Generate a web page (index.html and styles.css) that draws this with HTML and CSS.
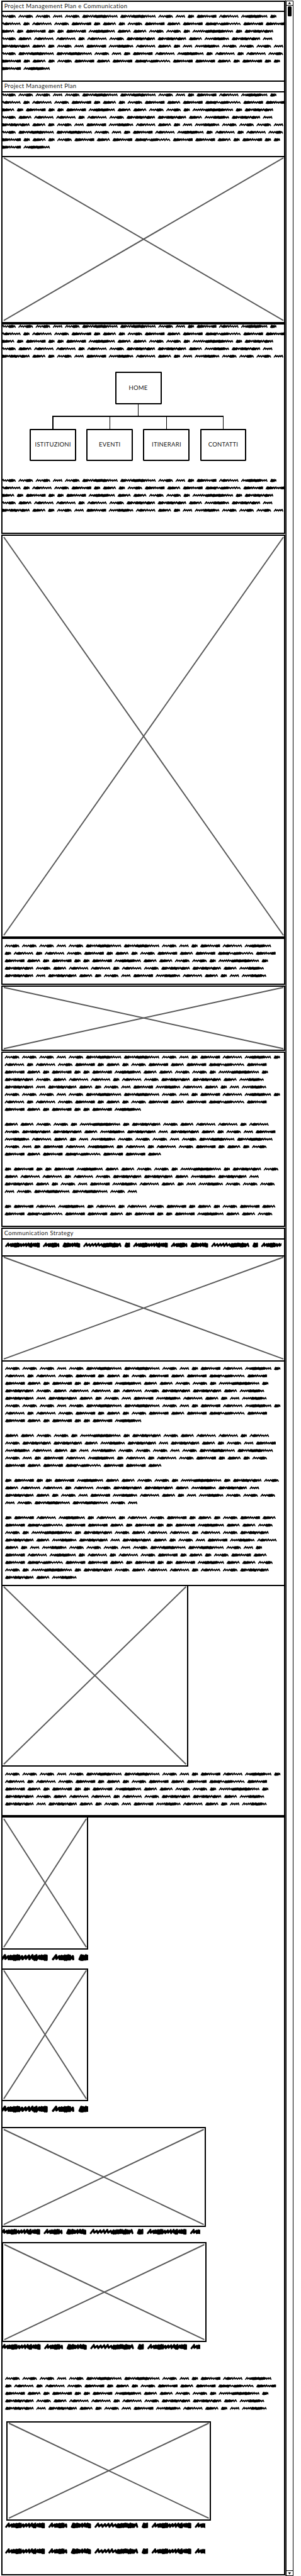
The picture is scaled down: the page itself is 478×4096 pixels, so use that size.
FILE: index.html
```html
<!DOCTYPE html>
<html lang="it">
<head>
<meta charset="utf-8">
<title>Project Management Plan e Communication</title>
<link rel="stylesheet" href="styles.css">
</head>
<body>
<div class="window">
  <main class="content">
    <section class="box intro">
      <h1 class="title">Project Management Plan e Communication</h1>
      <svg class="scribble" data-kind="flush" data-lines="aaabaccabdesfd|sdsaedgdaegeCee|gdeddefggaadhdi|agssdsaiigjib|igdabejsgdbjaaab|accabdesfdsdsa|edgdaegeCeegdedd|ef"></svg>
    </section>
    <section class="box plan">
      <h2 class="title">Project Management Plan</h2>
      <svg class="scribble" data-kind="flush" data-lines="aaabaccabdesfd|sdsaedgdaegeCee|gdeddefggaadhdi|agssdsaiigjib|igdabejsgdbjaaab|accabdesfdsdsa|edgdaegeCeegdedd|ef"></svg>
    </section>
    <div class="image image-plan"><svg class="cross"><line x1="0" y1="0" x2="100%" y2="100%"/><line x1="0" y1="100%" x2="100%" y2="0"/></svg></div>
    <section class="box sitemap">
      <svg class="scribble" data-kind="flush" data-lines="aaabaccabdesfd|sdsaedgdaegeCee|gdeddefggaadhdi|agssdsaiigjib|igdabejsgdbjaaab"></svg>
      <div class="tree">
        <div class="node">HOME</div>
        <div class="stem"></div>
        <div class="branches">
          <div class="branch"><div class="node">ISTITUZIONI</div></div>
          <div class="branch"><div class="node">EVENTI</div></div>
          <div class="branch"><div class="node">ITINERARI</div></div>
          <div class="branch"><div class="node">CONTATTI</div></div>
        </div>
      </div>
      <svg class="scribble" data-kind="flush" data-lines="aaabaccabdesfd|sdsaedgdaegeCee|gdeddefggaadhdi|agssdsaiigjib|igdabejsgdbjaaab"></svg>
    </section>
    <div class="image image-tall"><svg class="cross"><line x1="0" y1="0" x2="100%" y2="100%"/><line x1="0" y1="100%" x2="100%" y2="0"/></svg></div>
    <section class="box note">
      <svg class="scribble" data-kind="inset" data-lines="aaabaccabdesf|dsdsaedgdaegeCe|egdeddefggaadhd|iagssdsaiigj|ibigdabejsgdbj"></svg>
    </section>
    <div class="image image-wide"><svg class="cross"><line x1="0" y1="0" x2="100%" y2="100%"/><line x1="0" y1="100%" x2="100%" y2="0"/></svg></div>
    <section class="box article">
      <svg class="scribble" data-kind="inset" data-lines="aaabaccabdesfd|sdsaedgdaegeCe|egdeddefggaadhd|iagssdsaiigj|ibigdabejsgdbj|aaabaccabdesfd|sdsaedgdaegeCe|egdeddef||ggaadhdiagssds|aiigjibigdabe|jsgdbjaaabacc|abdesfdsdsaedgda|egeCeeg||deddefggaadhdia|gssdsaiigjib|igdabejsgdbjaaa|baccab||desfdsdsaedgdaeg|eCeegdeddefgga"></svg>
    </section>
    <section class="box strategy">
      <h2 class="title">Communication Strategy</h2>
      <svg class="scribble" data-kind="heading" data-lines="KLMNOKLMNOK"></svg>
    </section>
    <div class="image image-strategy"><svg class="cross"><line x1="0" y1="0" x2="100%" y2="100%"/><line x1="0" y1="100%" x2="100%" y2="0"/></svg></div>
    <section class="box details">
      <svg class="scribble" data-kind="wide" data-lines="aaabaccabdesfd|sdsaedgdaegeCe|egdeddefggaadhd|iagssdsaiigj|ibigdabejsgdbj|aaabaccabdesfd|sdsaedgdaegeCe|egdeddef||ggaadhdiagssds|aiigjibigdabe|jsgdbjaaabacc|abdesfdsdsaedgda|egeCeeg||deddefggaadhdia|gssdsaiigjib|igdabejsgdbjaaa|baccab||desfdsdsaedgdaeg|eCeegdeddefgga|adhdiagssdsai|igjibigdabejs|gdbjaaabaccabd|esfdsdsaedgdaeg|eCeegdeddefgga|adhdiagssdsai|igj"></svg>
      <div class="figure-row"><div class="image image-square"><svg class="cross"><line x1="0" y1="0" x2="100%" y2="100%"/><line x1="0" y1="100%" x2="100%" y2="0"/></svg></div></div>
      <svg class="scribble" data-kind="wide" data-lines="aaabaccabdesfd|sdsaedgdaegeCe|egdeddefggaadhd|iagssdsaiigj|ibigdabejsgdbj"></svg>
    </section>
    <section class="box gallery">
      <div class="image portrait"><svg class="cross"><line x1="0" y1="0" x2="100%" y2="100%"/><line x1="0" y1="100%" x2="100%" y2="0"/></svg></div>
      <svg class="scribble caption-portrait" data-kind="portrait" data-lines="KLM"></svg>
      <div class="image portrait portrait-next"><svg class="cross"><line x1="0" y1="0" x2="100%" y2="100%"/><line x1="0" y1="100%" x2="100%" y2="0"/></svg></div>
      <svg class="scribble caption-portrait" data-kind="portrait" data-lines="KLM"></svg>
      <div class="image landscape landscape-first"><svg class="cross"><line x1="0" y1="0" x2="100%" y2="100%"/><line x1="0" y1="100%" x2="100%" y2="0"/></svg></div>
      <svg class="scribble" data-kind="caption" data-lines="KLMNOKL"></svg>
      <div class="image landscape landscape-second"><svg class="cross"><line x1="0" y1="0" x2="100%" y2="100%"/><line x1="0" y1="100%" x2="100%" y2="0"/></svg></div>
      <svg class="scribble" data-kind="captionNext" data-lines="KLMNOKL"></svg>
      <svg class="scribble closing-text" data-kind="wide" data-lines="aaabaccabdesf|dsdsaedgdaegeCe|egdeddefggaadhd|iagssdsaiigj|ibigdabejsgdbj"></svg>
      <div class="image landscape landscape-third"><svg class="cross"><line x1="0" y1="0" x2="100%" y2="100%"/><line x1="0" y1="100%" x2="100%" y2="0"/></svg></div>
      <svg class="scribble" data-kind="captionInset" data-lines="KLMNOKL"></svg>
      <svg class="scribble closing-caption" data-kind="captionInset" data-lines="KLMNOKL"></svg>
    </section>
  </main>
  <aside class="scrollbar">
    <div class="arrow"><svg viewBox="0 0 8 6"><path d="M4 0L7.6 5.6H.4Z"/></svg></div>
    <div class="thumb"></div>
    <div class="arrow arrow-down"><svg viewBox="0 0 8 6"><path d="M4 6L7.6 .4H.4Z"/></svg></div>
  </aside>
</div>
<script src="scribble.js"></script>
</body>
</html>
```

FILE: scribble.js
```js
// Greeked words: width of the word and the rhythm of its strokes
// (l = one loose stroke, d = two dense strokes).
const WORDS = {
  a: [31, "lllddl"], b: [20.2, "llll"], c: [75, "ddlllddddddlllll"],
  C: [75, "ddddlldddlllll"], d: [13.6, "ddl"], e: [41.8, "dddlllldd"],
  s: [41.2, "lddlllll"], f: [55.8, "lldddddddlll"], g: [27.8, "dddll"],
  h: [86, "lllllldddddddddllll"], i: [60.4, "ddlldddllddll"], j: [52, "lllldddddll"],
  K: [73.4, "lldddlllldldd"], L: [35, "lldddl"], M: [37.3, "dddlldd"],
  N: [80.7, "lllllldddddl"], O: [11.8, "dd"]
};

// x: start of a line, size: enlargement, clip: right edge
const KINDS = {
  flush: { x: 3.6, size: 1, clip: 603 },
  inset: { x: 11.2, size: 1, clip: 603 },
  wide: { x: 12, size: 1, clip: 603 },
  heading: { x: 12.6, size: 1, clip: 595, large: true },
  portrait: { x: 4, size: 1.354, clip: 187, large: true },
  caption: { x: 3, size: 1.144, clip: 423, large: true },
  captionNext: { x: 4, size: 1.144, clip: 424, large: true },
  captionInset: { x: 13, size: 1.144, clip: 434, large: true }
};

const round = n => Math.round(n * 100) / 100;

function wordPath(x, y, width, rhythm, height, pen) {
  const step = (width - pen) / rhythm.length;
  let left = x;
  let d = `M${round(left)} ${round(y + height * 0.4)}`;
  [...rhythm].forEach((stroke, k) => {
    const strokes = stroke === "d" ? 2 : 1;
    const w = step / strokes;
    for (let s = 0; s < strokes; s++) {
      const top = y - height * (0.5 - ((k * 3 + s) % 4) * 0.07);
      const base = y + height * (stroke === "d" ? 0.55 - (k % 3) * 0.08 : 0.3 + (k % 2) * 0.1);
      const lean = Math.min(w * 1.1, height * 0.7);
      d += `L${round(Math.min(left + lean, x + width - pen))} ${round(top)}`;
      left += w;
      d += `L${round(left)} ${round(base)}`;
    }
  });
  return d;
}

document.querySelectorAll(".scribble").forEach(svg => {
  const kind = KINDS[svg.dataset.kind];
  const rows = svg.dataset.lines.split("|");
  const pitch = kind.large ? 20 : 15.8;
  const gap = (kind.large ? 6.5 : 5.45) * kind.size;
  const height = (kind.large ? 6.8 : 4.5) * kind.size;
  const pen = (kind.large ? 3.6 : 2.3) * kind.size;
  let d = "";
  rows.forEach((row, r) => {
    let x = kind.x;
    for (const key of row) {
      const [width, rhythm] = WORDS[key];
      d += wordPath(x, (r + 0.5) * pitch, width * kind.size, rhythm, height, pen);
      x += width * kind.size + gap;
    }
  });
  svg.setAttribute("viewBox", `2.7 0 ${kind.clip - 2.7} ${rows.length * pitch}`);
  svg.style.width = `${(kind.clip - 2.7) / 10}rem`;
  svg.style.height = `${rows.length * pitch / 10}rem`;
  svg.innerHTML = `<path d="${d}" stroke-width="${pen}"/>`;
});
```

FILE: styles.css
```css
/* 1rem is ten units of the wireframe grid */
html { font-size: 7.51px; --line: 2px; }
* { box-sizing: border-box; }
body { margin: 0; background: #fff; color: #000; font-family: Lato, "Noto Sans", sans-serif; }

.window { display: flex; height: 545.4rem; overflow: hidden; }
.content { width: 60.45rem; flex: none; padding: .1rem .08rem 0 .27rem; border-right: .1rem solid #555; }
.content > * { flex: none; }

.box { display: flex; flex-direction: column; align-items: flex-start; width: 60.1rem; border: var(--line) solid #000; }
.title { width: 100%; margin: 0; padding-left: .35rem; border-bottom: var(--line) solid #000; font-weight: 400; font-size: 1.26rem; line-height: 1.95rem; letter-spacing: .048rem; color: #222; flex: none; }

.scribble { display: block; flex: none; margin-left: calc(-1 * var(--line)); overflow: hidden; }
.scribble path { fill: none; stroke: #000; stroke-linejoin: round; stroke-linecap: round; }

.image { width: 60.1rem; padding: .22rem; border: var(--line) solid #000; flex: none; }
.cross { display: block; width: 100%; height: 100%; overflow: visible; }
.cross line { stroke: #585858; stroke-width: .26rem; }

.intro { height: 17rem; border-bottom: 0; }
.intro .title { height: 2.2rem; }
.intro .scribble { margin-top: .05rem; }
.plan { height: 15.9rem; border-bottom: 0; }
.plan .title { height: 2.17rem; }
.plan .scribble { margin-top: -.22rem; }
.image-plan { height: 35.4rem; }

.sitemap { height: 44.7rem; }
.sitemap .scribble { margin-top: -.42rem; }
.sitemap .tree + .scribble { margin-top: 3.34rem; }
.tree { display: flex; flex-direction: column; align-items: center; width: 45.9rem; margin: 2.56rem 0 0 5.75rem; }
.node { display: flex; align-items: center; justify-content: center; width: 9.85rem; height: 6.85rem; border: var(--line) solid #000; border-radius: .15rem; font-size: 1.27rem; letter-spacing: .03rem; color: #111; padding-bottom: .1rem; }
.stem { width: .2rem; height: 2.5rem; background: #000; }
.branches { display: flex; gap: 2.15rem; width: 45.9rem; }
.branch { width: 9.85rem; position: relative; padding-top: 2.7rem; }
.branch::before { content: ""; position: absolute; left: 4.83rem; top: 0; width: .2rem; height: 2.7rem; background: #000; }
.branch::after { content: ""; position: absolute; left: 4.83rem; top: 0; width: 12.2rem; height: .2rem; background: #000; }
.branch:last-child::after { display: none; }

.image-tall { height: 85.3rem; margin-top: .1rem; }
.note { height: 9.9rem; margin-top: .1rem; }
.note .scribble { margin-top: .55rem; }
.image-wide { height: 13.95rem; margin-top: .1rem; }
.article { height: 37.1rem; margin-top: .15rem; }
.article .scribble { margin-top: .07rem; }
.strategy { height: 5.78rem; margin-top: .15rem; border-bottom: 0; }
.strategy .title { height: 2.25rem; }
.strategy .scribble { margin-top: .11rem; }
.image-strategy { height: 22.52rem; }

.details { height: 96.28rem; border-top: 0; }
.details .scribble { margin-top: .76rem; }
.figure-row { width: 100%; margin-top: .67rem; border-top: var(--line) solid #000; flex: none; }
.image-square { width: 39.5rem; height: 38.55rem; margin: calc(-1 * var(--line)) 0 0 calc(-1 * var(--line)); }

.gallery { height: 160.67rem; margin-top: .1rem; }
.portrait { width: 18.43rem; height: 28.17rem; margin: calc(-1 * var(--line)) 0 0 calc(-1 * var(--line)); }
.portrait-next { margin-top: 1.33rem; }
.caption-portrait { margin-top: .62rem; }
.landscape { width: 43.25rem; height: 21.1rem; margin-left: calc(-1 * var(--line)); }
.landscape-first { margin-top: 2.87rem; }
.landscape-second { margin: 1.26rem 0 0 -.15rem; }
.landscape-third { margin: 1.91rem 0 0 .85rem; }
.closing-text { margin-top: 4.96rem; }
.closing-caption { margin-top: 3.39rem; }

.scrollbar { display: flex; flex-direction: column; align-items: center; width: 1.55rem; height: 545.3rem; margin-top: .1rem; border: .2rem solid #000; }
.arrow { display: flex; align-items: center; justify-content: center; width: 100%; height: 1rem; border-bottom: .2rem solid #000; flex: none; }
.arrow svg { width: .75rem; height: .5rem; }
.arrow-down { margin-top: auto; border-top: .2rem solid #000; border-bottom: 0; }
.thumb { width: .8rem; height: 2.1rem; margin-top: .15rem; border-radius: .2rem; background: #000; }
```
